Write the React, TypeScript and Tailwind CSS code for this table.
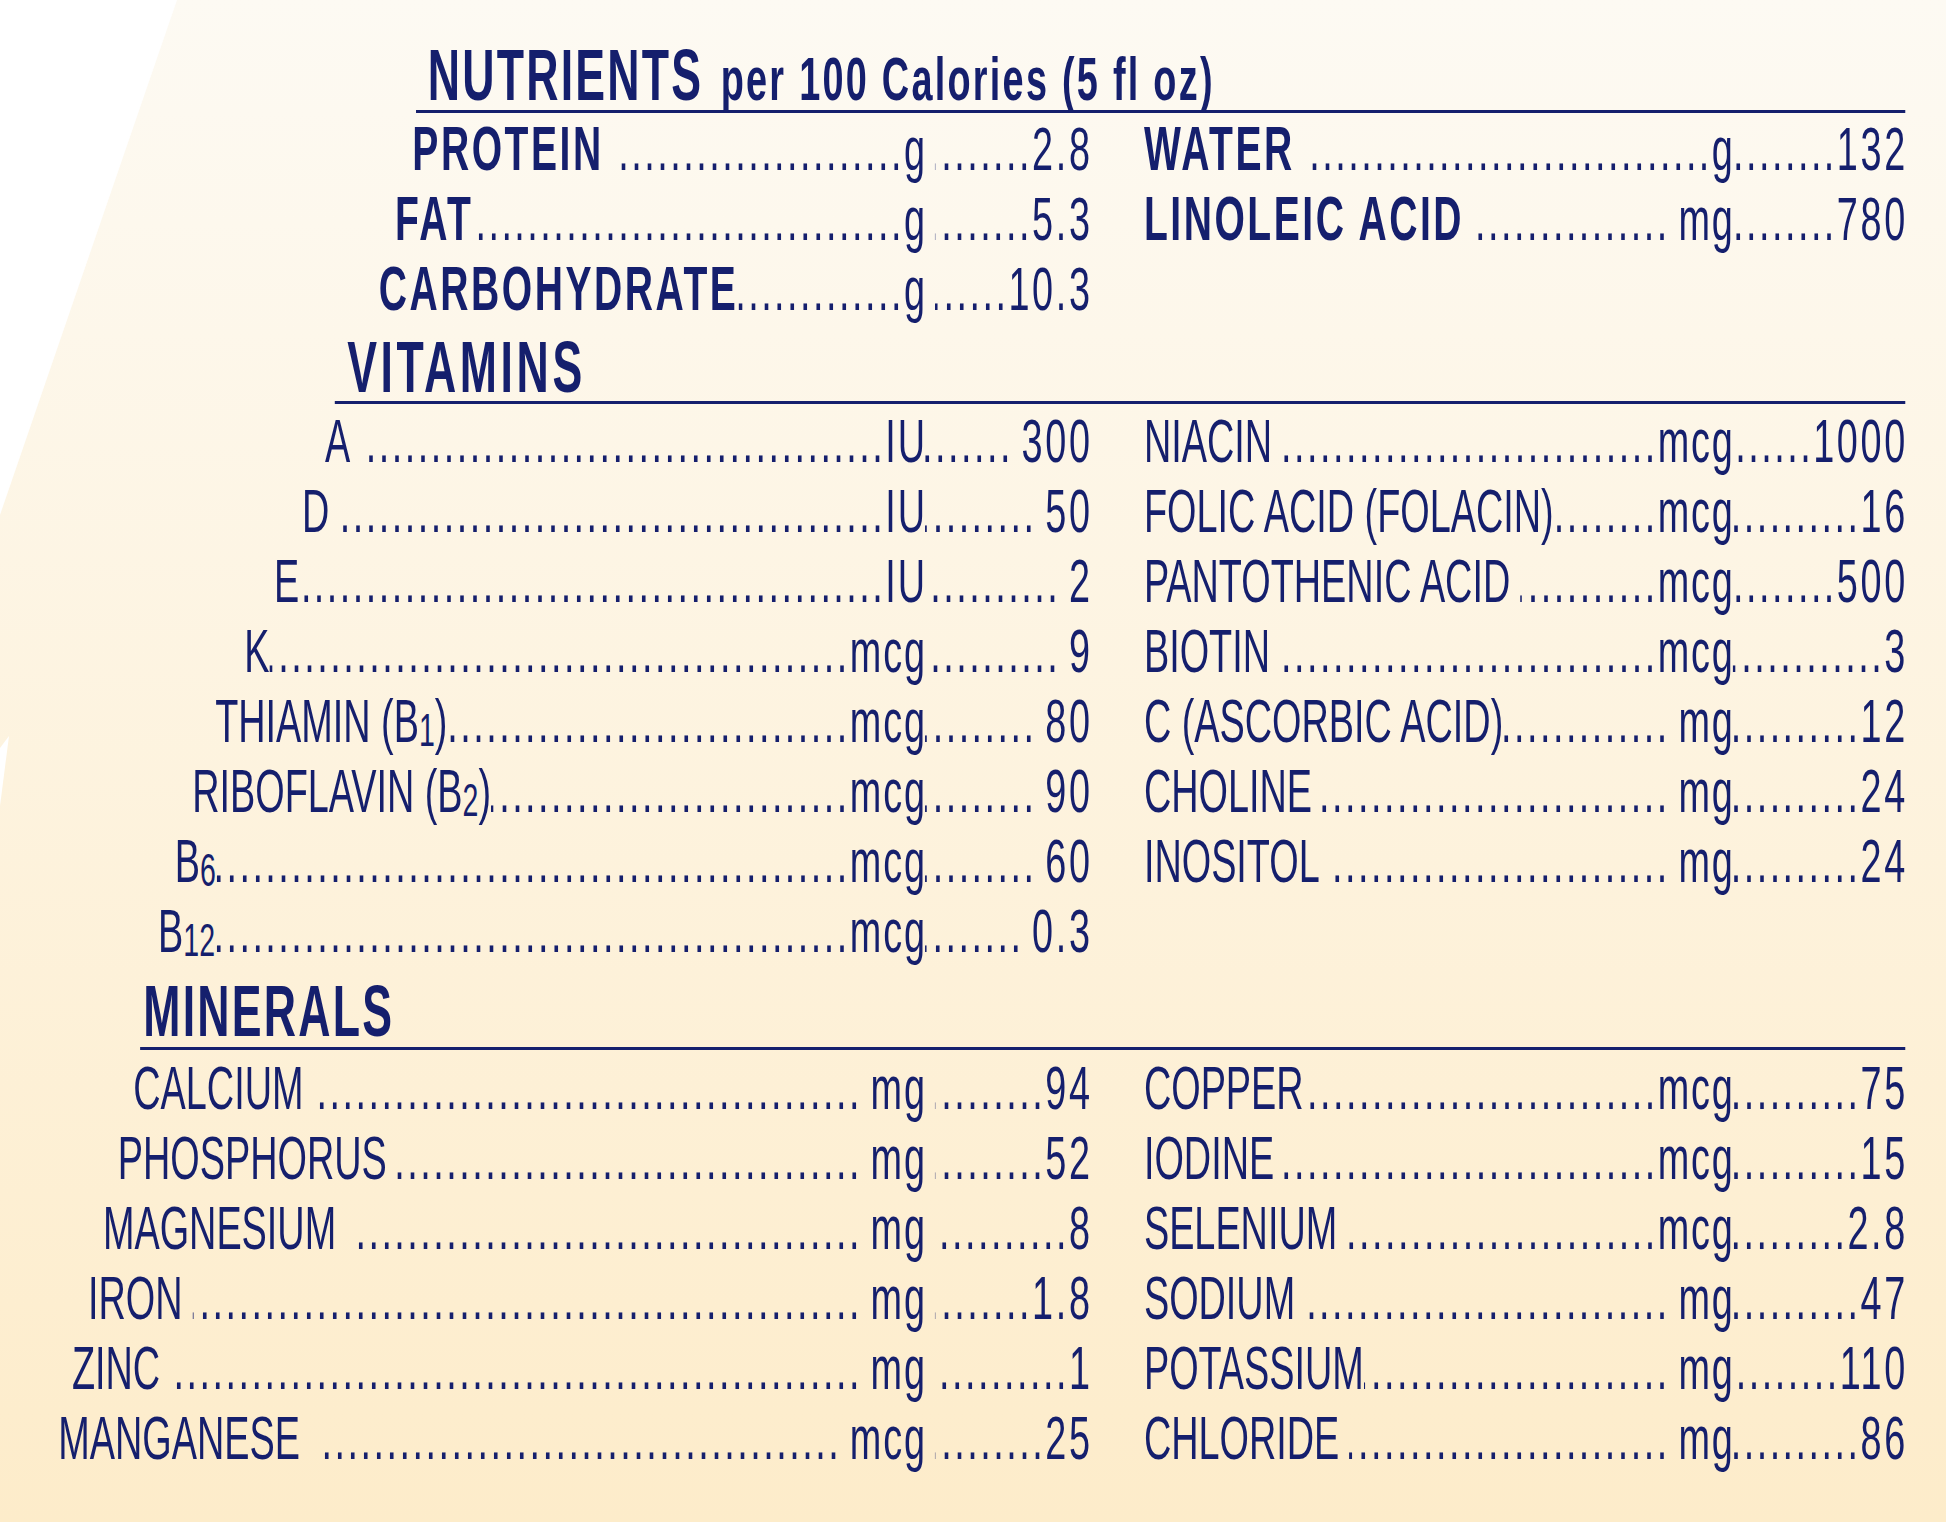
import type { ReactNode } from "react";

type Item = {
  label: ReactNode;
  unit: string;
  value: string;
  indent?: string;
  bold?: boolean;
  sp?: number; // gap after the label
  usp?: boolean; // gap before the unit
  gsp?: boolean; // gap after the unit
  vsp?: boolean; // gap before the value
};

const DOTS = ".".repeat(64);

function Sub({ children }: { children: ReactNode }) {
  return <span className="align-[-4px] text-[46px] leading-none">{children}</span>;
}

const nutrientsLeft: Item[] = [
  { label: "PROTEIN", unit: "g", value: "2.8", bold: true, indent: "pl-[665px]", sp: 1, gsp: true },
  { label: "FAT", unit: "g", value: "5.3", bold: true, indent: "pl-[637px]", gsp: true },
  { label: "CARBOHYDRATE", unit: "g", value: "10.3", bold: true, indent: "pl-[611px]", gsp: true },
];

const nutrientsRight: Item[] = [
  { label: "WATER", unit: "g", value: "132", bold: true, sp: 1 },
  { label: "LINOLEIC ACID", unit: "mg", value: "780", bold: true, sp: 1, usp: true },
];

const vitaminsLeft: Item[] = [
  { label: "A", unit: "IU", value: "300", indent: "pl-[524px]", sp: 1, vsp: true },
  { label: "D", unit: "IU", value: "50", indent: "pl-[487px]", sp: 1, vsp: true },
  { label: "E", unit: "IU", value: "2", indent: "pl-[442px]", vsp: true },
  { label: "K", unit: "mcg", value: "9", indent: "pl-[394px]", vsp: true },
  { label: <>THIAMIN (B<Sub>1</Sub>)</>, unit: "mcg", value: "80", indent: "pl-[347px]", vsp: true },
  { label: <>RIBOFLAVIN (B<Sub>2</Sub>)</>, unit: "mcg", value: "90", indent: "pl-[310px]", vsp: true },
  { label: <>B<Sub>6</Sub></>, unit: "mcg", value: "60", indent: "pl-[282px]", vsp: true },
  { label: <>B<Sub>12</Sub></>, unit: "mcg", value: "0.3", indent: "pl-[255px]", vsp: true },
];

const vitaminsRight: Item[] = [
  { label: "NIACIN", unit: "mcg", value: "1000", sp: 1 },
  { label: "FOLIC ACID (FOLACIN)", unit: "mcg", value: "16" },
  { label: "PANTOTHENIC ACID", unit: "mcg", value: "500", sp: 1 },
  { label: "BIOTIN", unit: "mcg", value: "3", sp: 1 },
  { label: "C (ASCORBIC ACID)", unit: "mg", value: "12", usp: true },
  { label: "CHOLINE", unit: "mg", value: "24", sp: 1, usp: true },
  { label: "INOSITOL", unit: "mg", value: "24", sp: 1, usp: true },
];

const mineralsLeft: Item[] = [
  { label: "CALCIUM", unit: "mg", value: "94", indent: "pl-[215px]", sp: 1, usp: true, gsp: true },
  { label: "PHOSPHORUS", unit: "mg", value: "52", indent: "pl-[190px]", sp: 1, usp: true, gsp: true },
  { label: "MAGNESIUM", unit: "mg", value: "8", indent: "pl-[166px]", sp: 2, usp: true, gsp: true },
  { label: "IRON", unit: "mg", value: "1.8", indent: "pl-[142px]", sp: 1, usp: true, gsp: true },
  { label: "ZINC", unit: "mg", value: "1", indent: "pl-[116px]", sp: 1, usp: true, gsp: true },
  { label: "MANGANESE", unit: "mcg", value: "25", indent: "pl-[94px]", sp: 2, usp: true, gsp: true },
];

const mineralsRight: Item[] = [
  { label: "COPPER", unit: "mcg", value: "75" },
  { label: "IODINE", unit: "mcg", value: "15", sp: 1 },
  { label: "SELENIUM", unit: "mcg", value: "2.8", sp: 1 },
  { label: "SODIUM", unit: "mg", value: "47", sp: 1, usp: true },
  { label: "POTASSIUM", unit: "mg", value: "110", usp: true },
  { label: "CHLORIDE", unit: "mg", value: "86", sp: 1, usp: true },
];

function Leader() {
  return (
    <span dir="rtl" className="min-w-0 flex-1 overflow-clip whitespace-nowrap tracking-[4px]">
      {DOTS}
    </span>
  );
}

function Row({ item, side }: { item: Item; side: "left" | "right" }) {
  return (
    <div className={`flex h-[70px] items-baseline text-[61px] leading-[70px] ${item.indent ?? ""}`}>
      <span className={`shrink-0 whitespace-nowrap ${item.bold ? "text-[63px] font-bold tracking-[0.065em]" : ""}`}>
        {item.label}
      </span>
      {item.sp === 1 && <span className="w-[16px] shrink-0" />}
      {item.sp === 2 && <span className="w-[34px] shrink-0" />}
      <Leader />
      {item.usp && <span className="w-[14px] shrink-0" />}
      <span className="mr-[-0.05em] shrink-0 whitespace-nowrap tracking-[0.05em]">{item.unit}</span>
      <span className={`flex shrink-0 items-baseline ${side === "left" ? "w-[266px]" : "w-[278px]"}`}>
        {item.gsp && <span className="w-[16px] shrink-0" />}
        <Leader />
        {item.vsp && <span className="w-[14px] shrink-0" />}
        <span className="mr-[-0.07em] shrink-0 tracking-[0.07em]">{item.value}</span>
      </span>
    </div>
  );
}

function Section({ left, right }: { left: Item[]; right: Item[] }) {
  return (
    <div className="grid grid-cols-[1758px_1228px] gap-x-[87px]">
      <div className="flex flex-col">
        {left.map((item, i) => (
          <Row key={i} item={item} side="left" />
        ))}
      </div>
      <div className="flex flex-col">
        {right.map((item, i) => (
          <Row key={i} item={item} side="right" />
        ))}
      </div>
    </div>
  );
}

export default function App() {
  return (
    <div className="relative h-[1522px] w-[1946px] overflow-hidden bg-linear-to-b from-[#fdfaf3] to-[#fdecca] font-['Liberation_Sans',Arial,sans-serif] text-[#151f6d]">
      <svg className="absolute inset-0" width="1946" height="1522" viewBox="0 0 1946 1522">
        <polygon points="0,0 177,0 0,515" fill="#ffffff" />
        <polygon points="0,748 9,736 0,806" fill="#ffffff" />
      </svg>

      <div className="relative w-[3073px] origin-top-left scale-x-[0.62] pt-[40px]">
        <div className="ml-[671px] flex h-[73px] items-baseline border-b-[3px] border-[#151f6d] pl-[19px] font-bold leading-[70px]">
          <span className="text-[72px] tracking-[0.05em]">NUTRIENTS</span>
          <span className="ml-[28px] text-[61px] tracking-[0.06em]">per 100 Calories (5 fl oz)</span>
        </div>
        <Section left={nutrientsLeft} right={nutrientsRight} />

        <div className="ml-[540px] mt-[9px] flex h-[72px] items-baseline border-b-[3px] border-[#151f6d] pl-[20px] text-[72px] font-bold leading-[70px] tracking-[0.08em]">
          VITAMINS
        </div>
        <div className="mt-[2px]">
          <Section left={vitaminsLeft} right={vitaminsRight} />
        </div>

        <div className="ml-[226px] mt-[10px] flex h-[74px] items-baseline border-b-[3px] border-[#151f6d] pl-[5px] text-[72px] font-bold leading-[70px] tracking-[0.05em]">
          MINERALS
        </div>
        <div className="mt-[3px]">
          <Section left={mineralsLeft} right={mineralsRight} />
        </div>
      </div>
    </div>
  );
}
